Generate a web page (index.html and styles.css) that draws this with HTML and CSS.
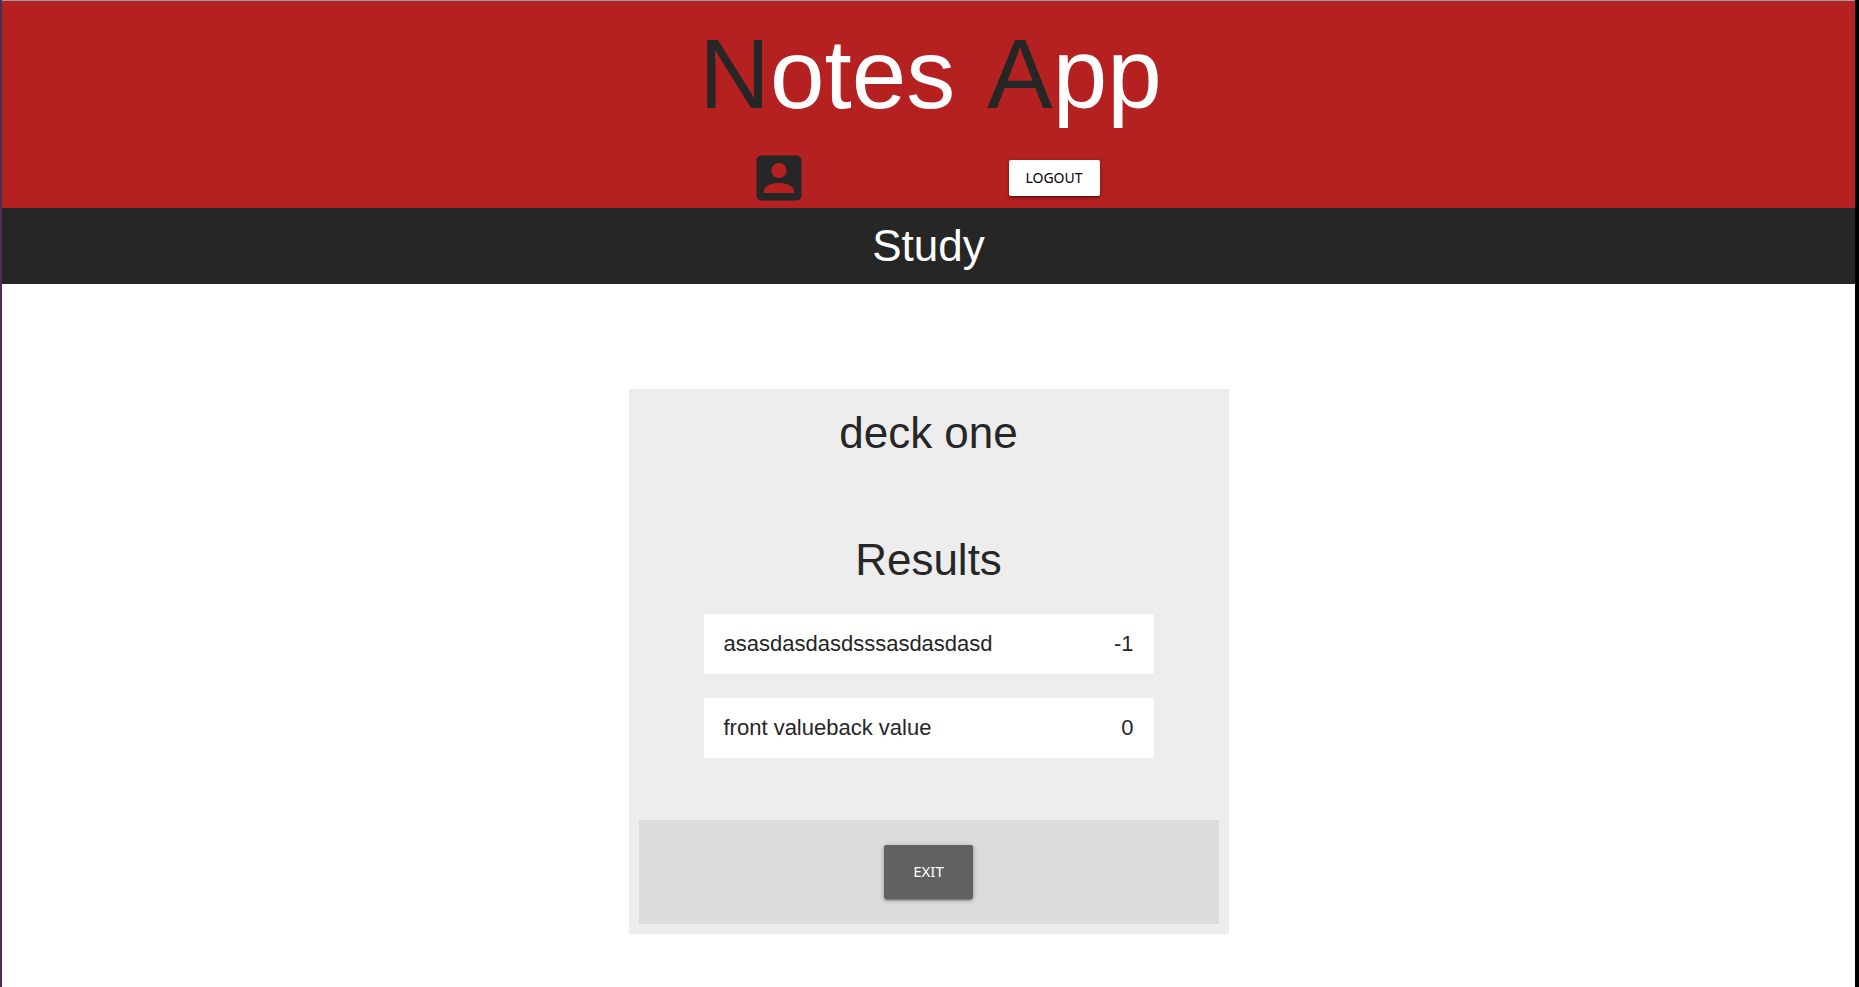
FILE: index.html
```html
<!DOCTYPE html>
<html lang="en">
<head>
<meta charset="utf-8">
<title>Notes App</title>
<link rel="stylesheet" href="styles.css">
</head>
<body>
<header class="header">
  <h1 class="brand"><span><span class="cap">N</span>otes</span> <span><span class="cap">A</span>pp</span></h1>
  <nav class="nav">
    <a class="account" href="#" aria-label="Account">
      <svg viewBox="0 0 24 24" aria-hidden="true"><path d="M3 5v14c0 1.100.89 2 2 2h14c1.100 0 2-.9 2-2V5c0-1.100-.9-2-2-2H5c-1.110 0-2 .9-2 2zm12 4c0 1.660-1.340 3-3 3s-3-1.340-3-3 1.340-3 3-3 3 1.340 3 3zm-9 8c0-2 4-3.100 6-3.100s6 1.100 6 3.100v1H6v-1z"/></svg>
    </a>
    <button class="btn logout" type="button">LOGOUT</button>
  </nav>
</header>
<h2 class="page-title">Study</h2>
<main class="deck">
  <h3 class="deck-name">deck one</h3>
  <section class="results">
    <h3 class="results-title">Results</h3>
    <ul class="list">
      <li class="row"><span>asasdasdasdsssasdasdasd</span><span>-1</span></li>
      <li class="row"><span>front valueback value</span><span>0</span></li>
    </ul>
  </section>
  <footer class="actions">
    <button class="btn exit" type="button">EXIT</button>
  </footer>
</main>
</body>
</html>
```
FILE: styles.css
```css
* {
  box-sizing: border-box;
}

body {
  margin: 0;
  min-height: 100vh;
  background: #fff;
  border-left: 2px solid #4b2e57;
  border-right: 4px solid #000;
  color: #262626;
  font-family: "Liberation Sans", Arial, sans-serif;
}

h1, h2, h3, ul {
  margin: 0;
  padding: 0;
  font-weight: 400;
  list-style: none;
}

.header {
  background: #b52121;
  border-top: 1px solid #9b9b9b;
}

.brand {
  display: flex;
  justify-content: center;
  gap: 32px;
  padding: 0 0 1px 4px;
  color: #fff;
  font-size: 98px;
  line-height: 146px;
}

.cap {
  color: #262626;
}

.nav {
  display: flex;
  justify-content: center;
  align-items: center;
  gap: 200px;
}

.account {
  display: block;
  height: 60px;
}

.account svg {
  display: block;
  width: 60px;
  height: 60px;
  fill: #262626;
}

.btn {
  border: 0;
  border-radius: 2px;
  padding: 0 16px 2px;
  font-family: "Noto Sans", sans-serif;
  box-shadow: 0 3px 1px -2px rgba(0, 0, 0, 0.2), 0 2px 2px 0 rgba(0, 0, 0, 0.14), 0 1px 5px 0 rgba(0, 0, 0, 0.3);
  cursor: pointer;
}

.logout {
  min-width: 91px;
  height: 36px;
  margin-right: 9px;
  background: #fff;
  color: #000;
  font-size: 14px;
}

.exit {
  min-width: 89px;
  height: 54px;
  background: #616161;
  color: #fff;
  font-size: 15px;
}

.page-title {
  background: #262626;
  color: #fff;
  font-size: 44px;
  line-height: 76px;
  text-align: center;
}

.deck {
  width: 600px;
  max-width: 100%;
  margin: 105px auto 0;
  padding: 10px;
  background: #ededed;
}

.deck-name,
.results-title {
  font-size: 44px;
  line-height: 68px;
  text-align: center;
}

.results {
  max-width: 450px;
  margin: 59px auto 62px;
}

.list {
  display: grid;
  gap: 24px;
  margin-top: 20px;
}

.row {
  display: flex;
  justify-content: space-between;
  align-items: center;
  min-height: 60px;
  padding: 0 20px;
  background: #fff;
  border-radius: 3px;
  font-size: 22px;
}

.actions {
  display: flex;
  justify-content: center;
  padding: 25px;
  background: #dcdcdc;
}
```
